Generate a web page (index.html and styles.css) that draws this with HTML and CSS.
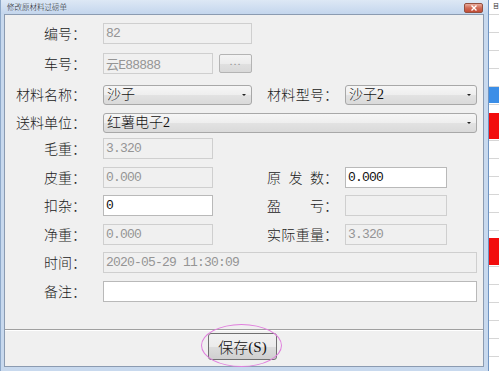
FILE: index.html
```html
<!DOCTYPE html>
<html lang="zh">
<head>
<meta charset="utf-8">
<title>修改原材料过磅单</title>
<link rel="stylesheet" href="styles.css">
</head>
<body>
<div class="screen">
  <div class="window">
    <div class="titlebar">
      <span class="title">修改原材料过磅单</span>
      <span class="close"><svg width="8" height="6" viewBox="0 0 8 6"><path d="M1.5 0.5 L6.5 5.5 M6.5 0.5 L1.5 5.5" stroke="#fff" stroke-width="1.4" fill="none"/></svg></span>
    </div>
    <div class="client">
      <div class="panel">
        <div class="row">
          <span class="lbl">编号：</span>
          <input class="tb dis w149" value="82" disabled>
        </div>
        <div class="row r2">
          <span class="lbl">车号：</span>
          <input class="tb dis w110" value="云E88888" disabled>
          <span class="dots">...</span>
        </div>
        <div class="row r3">
          <span class="lbl">材料名称：</span>
          <div class="lcell"><div class="cb w149"><span>沙子</span><i class="arr"></i></div></div>
          <span class="rlbl"><span class="jt">材料型号</span>：</span>
          <div class="cb w132"><span>沙子2</span><i class="arr"></i></div>
        </div>
        <div class="row r4">
          <span class="lbl">送料单位：</span>
          <div class="cb w374"><span>红薯电子2</span><i class="arr"></i></div>
        </div>
        <div class="row r5">
          <span class="lbl">毛重：</span>
          <input class="tb dis w110" value="3.320" disabled>
        </div>
        <div class="row">
          <span class="lbl">皮重：</span>
          <div class="lcell"><input class="tb dis w110" value="0.000" disabled></div>
          <span class="rlbl"><span class="jt">原 发 数</span>：</span>
          <input class="tb w102" value="0.000">
        </div>
        <div class="row">
          <span class="lbl">扣杂：</span>
          <div class="lcell"><input class="tb w110" value="0"></div>
          <span class="rlbl"><span class="jt">盈 亏</span>：</span>
          <input class="tb dis w102" value="" disabled>
        </div>
        <div class="row">
          <span class="lbl">净重：</span>
          <div class="lcell"><input class="tb dis w110" value="0.000" disabled></div>
          <span class="rlbl"><span class="jt">实际重量</span>：</span>
          <input class="tb dis w102" value="3.320" disabled>
        </div>
        <div class="row">
          <span class="lbl">时间：</span>
          <input class="tb dis w374" value="2020-05-29 11:30:09" disabled>
        </div>
        <div class="row">
          <span class="lbl">备注：</span>
          <input class="tb w374" value="">
        </div>
      </div>
      <div class="footer">
        <div class="save"><span class="cjk">保存</span><span class="lat">(S)</span></div>
        <span class="ring"></span>
      </div>
    </div>
  </div>
  <div class="behind">
    <div class="bh-head">目</div>
    <div class="blk blue"></div>
    <div class="blk red1"></div>
    <div class="blk red2"></div>
  </div>
</div>
</body>
</html>
```
FILE: styles.css
```css
html, body {
  margin: 0;
  padding: 0;
}
body {
  width: 499px;
  height: 371px;
  overflow: hidden;
  font-family: "Noto Sans CJK SC", sans-serif;
  background: #fff;
}
.screen {
  display: flex;
  width: 499px;
  height: 371px;
}
.window {
  width: 489px;
  height: 371px;
  box-sizing: border-box;
  border-left: 1px solid #8ea9ca;
  border-right: 1px solid #6f94c2;
  background: #c8d9ee;
  display: flex;
  flex-direction: column;
  flex: none;
}
.titlebar {
  height: 14px;
  flex: none;
  display: flex;
  justify-content: space-between;
  align-items: flex-start;
  padding: 0 5px 0 6px;
  background: linear-gradient(#dde8f5, #c4d6ed);
}
.title {
  font-size: 7.5px;
  line-height: 14px;
  font-weight: 300;
  color: #1c1c1c;
}
.close {
  width: 19px;
  height: 10px;
  margin-top: 3px;
  box-sizing: border-box;
  border: 1px solid #93503f;
  border-radius: 2px;
  background: linear-gradient(#e9ab9b, #d06a55 50%, #c24c36);
  display: flex;
  align-items: center;
  justify-content: center;
}
.close svg { display: block; }
.client {
  flex: 1;
  margin: 0 4px 4px 3px;
  border: 1px solid #8b9bb1;
  background: #f0f0f0;
  display: flex;
  flex-direction: column;
}
.panel {
  height: 315px;
  flex: none;
  box-sizing: border-box;
  border-bottom: 1px solid #a0a0a0;
  padding-top: 8px;
  display: flex;
  flex-direction: column;
  gap: 7.5px;
}
.row {
  display: flex;
  align-items: center;
  height: 21px;
}
.r2 { margin-top: 1.5px; }
.r3 { margin-top: 2.5px; }
.r4 { margin-top: -0.5px; }
.r5 { margin-top: -2.5px; }
.lbl {
  width: 81px;
  margin-right: 17px;
  flex: none;
  text-align: right;
  font-size: 14px;
  font-weight: 300;
  line-height: 21px;
  color: #1a1a1a;
  white-space: nowrap;
}
.lcell {
  width: 164px;
  flex: none;
  display: flex;
  align-items: center;
}
.rlbl {
  width: 78px;
  flex: none;
  font-size: 14px;
  font-weight: 300;
  line-height: 21px;
  color: #1a1a1a;
  white-space: nowrap;
  display: flex;
}
.jt {
  width: 57px;
  display: inline-block;
  text-align: justify;
  text-align-last: justify;
  text-justify: inter-character;
  white-space: normal;
}
.tb {
  -webkit-appearance: none;
  appearance: none;
  height: 21px;
  box-sizing: border-box;
  margin: 0;
  padding: 0 0 0 2px;
  border: 1px solid #b9b9b9;
  border-radius: 0;
  background: #fff;
  color: #111;
  font: 13px "Liberation Mono", "Noto Sans CJK SC", monospace;
  letter-spacing: -0.8px;
  outline: none;
  flex: none;
}
.tb.dis {
  background: #f0f0f0;
  border-color: #cfcfcf;
  color: #959595;
  -webkit-text-fill-color: #959595;
  opacity: 1;
}
.w102 { width: 102px; }
.w110 { width: 110px; }
.w132 { width: 132px; }
.w149 { width: 149px; }
.w374 { width: 374px; }
.dots {
  width: 33px;
  height: 19px;
  margin-left: 6px;
  box-sizing: border-box;
  border: 1px solid #b4b4b4;
  border-radius: 2px;
  background: linear-gradient(#f4f4f4, #ececec 50%, #e0e0e0 51%, #d9d9d9);
  color: #8f8f8f;
  font: 11px "Liberation Sans", sans-serif;
  letter-spacing: 1px;
  line-height: 13px;
  text-align: center;
  flex: none;
}
.cb {
  height: 20px;
  box-sizing: border-box;
  border: 1px solid #a8a8a8;
  border-radius: 3px;
  background: linear-gradient(#f6f6f6, #eeeeee 50%, #e2e2e2 51%, #dadada);
  display: flex;
  align-items: center;
  justify-content: space-between;
  padding: 0 5px 0 3px;
  font: 300 14px "Liberation Serif", "Noto Sans CJK SC", serif;
  color: #111;
  flex: none;
}
.cb span { line-height: 18px; }
.arr {
  width: 0;
  height: 0;
  border-left: 2px solid transparent;
  border-right: 2px solid transparent;
  border-top: 2px solid #222;
}
.footer {
  flex: 1;
  position: relative;
  border-top: 1px solid #ffffff;
  padding: 2px 0 0 203px;
}
.save {
  width: 69px;
  height: 27px;
  box-sizing: border-box;
  border: 1px solid #707070;
  border-radius: 3px;
  background: linear-gradient(#f2f2f2, #ebebeb 50%, #dddddd 51%, #cfcfcf);
  color: #111;
  display: flex;
  align-items: center;
  justify-content: center;
  font-size: 15px;
  line-height: 20px;
}
.save .cjk {
  font-family: "Noto Sans CJK SC", sans-serif;
  font-weight: 300;
}
.save .lat {
  font-family: "Liberation Serif", serif;
  font-weight: 400;
}
.ring {
  position: absolute;
  left: 196px;
  top: -7px;
  width: 81px;
  height: 43px;
  box-sizing: border-box;
  border: 1px solid #e07fdd;
  border-radius: 50%;
  pointer-events: none;
}
.behind {
  width: 10px;
  height: 371px;
  flex: none;
  background-color: #fff;
  background-image: repeating-linear-gradient(to bottom, transparent 0 14px, #d6d6d6 14px 15px, transparent 15px 18px);
  display: flex;
  flex-direction: column;
  overflow: hidden;
}
.bh-head {
  height: 14px;
  padding-left: 4px;
  font-size: 6px;
  line-height: 11px;
  color: #333;
  background: #fff;
  overflow: hidden;
  white-space: nowrap;
}
.blk { flex: none; }
.blue { margin-top: 73px; height: 16px; background: #3b8ee7; }
.red1 { margin-top: 10px; height: 26px; background: #f20d0d; }
.red2 { margin-top: 99px; height: 27px; background: #f20d0d; }
```
